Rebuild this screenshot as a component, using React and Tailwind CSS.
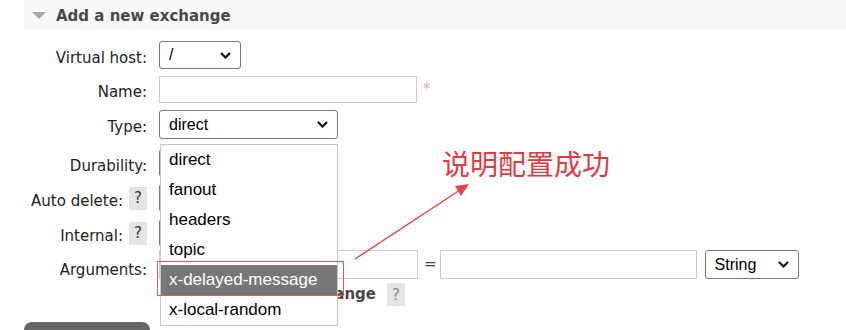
import React from 'react';

const labelFont = { fontFamily: '"DejaVu Sans", Verdana, sans-serif' };
const ctrlFont = { fontFamily: '"Liberation Sans", Arial, sans-serif' };

const Chevron = () => (
    <svg width="11" height="7" viewBox="0 0 11 7" className="shrink-0">
        <polyline points="1,1 5.5,5.5 10,1" fill="none" stroke="#111" strokeWidth="2.2" />
    </svg>
);

const Select = ({ value, className }) => (
    <div
        style={ctrlFont}
        className={`flex items-center justify-between bg-white border border-[#767676] rounded-[3px] pl-[9px] pr-[9px] text-[16px] text-black ${className}`}
    >
        <span>{value}</span>
        <Chevron />
    </div>
);

const Help = ({ light }) => (
    <span
        style={labelFont}
        className={`inline-flex items-center justify-center w-[18px] h-[23px] bg-[#e4e4e4] text-[15px] ${light ? 'text-[#8a8a8a]' : 'text-[#333]'}`}
    >
        ?
    </span>
);

const Row = ({ label, help, className, children, labelClass = 'items-center' }) => (
    <div className={`flex ${className}`}>
        <div className={`w-[123px] flex justify-end gap-[6px] ${labelClass}`}>
            <span style={labelFont} className="pt-[6px] text-[15px] text-[#222]">{label}</span>
            {help && <Help />}
        </div>
        <div className="ml-[12px] flex items-center">{children}</div>
    </div>
);

const options = ['direct', 'fanout', 'headers', 'topic', 'x-delayed-message', 'x-local-random'];

export default function App() {
    return (
        <div className="relative w-[846px] h-[330px] overflow-hidden bg-white">
            {/* Section header */}
            <div className="ml-[24px] h-[30px] pt-[3px] bg-[#f8f8f8] flex items-center">
                <svg width="14" height="8" viewBox="0 0 14 8" className="ml-[8px] -mt-[2px]">
                    <polygon points="0,0 14,0 7,7" fill="#a8a8a8" />
                </svg>
                <span style={labelFont} className="ml-[10px] text-[15px] font-bold text-[#484848]">
                    Add a new exchange
                </span>
            </div>

            <div className="ml-[24px]">
                <Row label="Virtual host:" className="mt-[11px] h-[28px]">
                    <Select value="/" className="w-[82px] h-[28px]" />
                </Row>
                <Row label="Name:" className="mt-[7px] h-[27px]">
                    <div className="w-[258px] h-[27px] border border-[#cccccc] bg-white" />
                    <span style={labelFont} className="ml-[6px] text-[15px] text-[#f4a0a8]">*</span>
                </Row>
                <Row label="Type:" className="mt-[7px] h-[29px]">
                    <Select value="direct" className="w-[179px] h-[29px]" />
                </Row>
                <Row label="Durability:" className="mt-[10px] h-[28px]">
                    <Select value="" className="w-[100px] h-[28px]" />
                </Row>
                <Row label="Auto delete:" help className="mt-[7px] h-[28px]">
                    <Select value="" className="w-[70px] h-[28px]" />
                </Row>
                <Row label="Internal:" help className="mt-[7px] h-[28px]">
                    <Select value="" className="w-[70px] h-[28px]" />
                </Row>
                <Row label="Arguments:" labelClass="items-start pt-[3px]" className="mt-[3px] h-[29px]">
                    <div className="w-[259px] h-[29px] border border-[#cccccc] bg-white" />
                    <span style={labelFont} className="ml-[6px] mr-[3px] text-[15px] text-[#444]">=</span>
                    <div className="w-[257px] h-[29px] border border-[#cccccc] bg-white" />
                    <Select value="String" className="ml-[8px] w-[94px] h-[29px]" />
                </Row>
                <div className="flex mt-[4px] h-[22px] items-center">
                    <div
                        style={labelFont}
                        className="ml-[135px] w-[217px] overflow-hidden whitespace-nowrap text-right text-[15px] font-bold text-[#484848]"
                    >
                        ange
                    </div>
                    <span className="ml-[11px]"><Help light /></span>
                </div>
                <div className="mt-[17px] w-[126px] h-[30px] bg-[#666666] rounded-t-[8px]" />
            </div>

            {/* Open dropdown menu */}
            <div
                style={ctrlFont}
                className="absolute left-[160px] top-[144px] w-[178px] h-[182px] bg-white border border-[#c8c8c8] text-[17px] text-black"
            >
                {options.map((o) => (
                    <div
                        key={o}
                        className={`h-[30px] flex items-center pl-[8px] ${o === 'x-delayed-message' ? 'bg-[#777777] text-white' : ''}`}
                    >
                        {o}
                    </div>
                ))}
            </div>

            {/* Annotation */}
            <div className="absolute left-[157px] top-[261px] w-[187px] h-[35px] border-[1.5px] border-[#e85858]" />
            <svg className="absolute left-0 top-0" width="846" height="330">
                <line x1="355" y1="259" x2="460" y2="190" stroke="#e64545" strokeWidth="1.4" />
                <polygon points="469,184 455,186 461,196" fill="#e64545" />
            </svg>
            <div
                style={{ fontFamily: '"Noto Sans CJK SC", sans-serif' }}
                className="absolute left-[442px] top-[145px] text-[28px] leading-[36px] text-[#e23b3f]"
            >
                说明配置成功
            </div>
        </div>
    );
}
